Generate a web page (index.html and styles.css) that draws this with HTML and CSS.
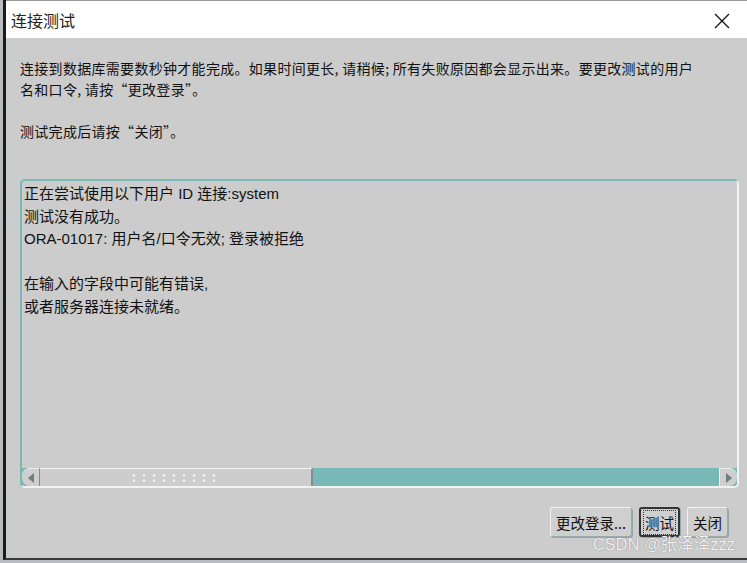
FILE: index.html
```html
<!DOCTYPE html>
<html lang="zh-CN">
<head>
  <meta charset="UTF-8">
  <title>连接测试</title>
  <link rel="stylesheet" href="styles.css">
</head>
<body>
  <div class="window">
    <div class="titlebar">
      <span class="title">连接测试</span>
      <svg class="close" width="16" height="16" viewBox="0 0 16 16">
        <path d="M1 1 L15 15 M15 1 L1 15" stroke="#111" stroke-width="1.3" fill="none"/>
      </svg>
    </div>
    <div class="content">
      <p class="intro">连接到数据库需要数秒钟才能完成。如果时间更长, 请稍候; 所有失败原因都会显示出来。要更改测试的用户<br>名和口令, 请按“更改登录”。</p>
      <p class="intro">测试完成后请按“关闭”。</p>

      <div class="output">
        <div class="output-text">
          <div>正在尝试使用以下用户 ID 连接:system</div>
          <div>测试没有成功。</div>
          <div>ORA-01017: 用户名/口令无效; 登录被拒绝</div>
          <div>&nbsp;</div>
          <div>在输入的字段中可能有错误,</div>
          <div>或者服务器连接未就绪。</div>
        </div>
        <div class="hscroll">
          <div class="arrow left"><span></span></div>
          <div class="thumb"><span class="grip"></span></div>
          <div class="track"></div>
          <div class="arrow right"><span></span></div>
        </div>
      </div>

      <div class="buttons">
        <button class="btn">更改登录...</button>
        <button class="btn focused"><span>测试</span></button>
        <button class="btn">关闭</button>
      </div>
    </div>
    <div class="watermark">CSDN @张泽泽zzz</div>
  </div>
</body>
</html>
```

FILE: styles.css
```css
:root {
  --bg: #cccccc;
  --teal: #78b9b7;
  --text: #111;
}

* {
  box-sizing: border-box;
}

body {
  margin: 0;
  background: #b9bcc0;
  font-family: "Liberation Sans", "Noto Sans CJK SC", sans-serif;
  color: var(--text);
}

.window {
  position: relative;
  margin-left: 3px;
  width: 744px;
  height: 560px;
  border-left: 3px solid #1b1b1b;
  border-bottom: 2px solid #3a3a3a;
  background: var(--bg);
  display: flex;
  flex-direction: column;
}

.titlebar {
  height: 38px;
  background: #fff;
  border-top: 1px solid #9a9a9a;
  display: flex;
  align-items: center;
  justify-content: space-between;
  padding: 0 17px 0 5px;
}

.title {
  font-size: 16px;
  color: #222;
}

.close {
  display: block;
  margin-top: 2px;
}

.content {
  flex: 1;
  display: flex;
  flex-direction: column;
  padding: 0 8px 0 14px;
}

.intro {
  margin: 0;
  font-family: "Noto Sans CJK SC", sans-serif;
  font-size: 14px;
  letter-spacing: 0.3px;
  line-height: 21px;
  white-space: nowrap;
}

.intro:first-child {
  margin-top: 20px;
  margin-bottom: 21px;
}

.output {
  margin-top: 37px;
  height: 309px;
  border: 2px solid var(--teal);
  border-right-color: #f2f2f2;
  border-bottom-color: #f2f2f2;
  border-radius: 5px;
  display: flex;
  flex-direction: column;
  overflow: hidden;
}

.output-text {
  flex: 1;
  font-size: 15px;
  line-height: 22.6px;
  padding: 2px 0 0 2px;
}

.hscroll {
  height: 18px;
  display: flex;
  background: var(--teal);
}

.arrow {
  width: 18px;
  background: #cfcfcf;
  display: flex;
  align-items: center;
  justify-content: center;
  border-top: 1px solid #eee;
}

.arrow.left {
  border-radius: 8px 0 0 8px;
  border-right: 1px solid #888;
}

.arrow.right {
  border-radius: 0 8px 8px 0;
  border-left: 1px solid #eee;
}

.arrow span {
  width: 0;
  height: 0;
  border-top: 5px solid transparent;
  border-bottom: 5px solid transparent;
}

.arrow.left span {
  border-right: 6px solid #6f7f80;
}

.arrow.right span {
  border-left: 6px solid #6f7f80;
}

.thumb {
  width: 273px;
  background: #cdcdcd;
  border-top: 1px solid #f4f4f4;
  border-right: 2px solid #8a8a8a;
  display: flex;
  align-items: center;
  justify-content: center;
}

.grip {
  width: 94px;
  height: 9px;
  background-image: radial-gradient(circle, #fff 1px, transparent 1.2px);
  background-size: 10px 5px;
}

.track {
  flex: 1;
}

.buttons {
  display: flex;
  justify-content: flex-end;
  gap: 7px;
  margin-top: 19px;
  padding-right: 11px;
}

.btn {
  height: 30px;
  padding: 0 5px;
  font-family: "Noto Sans CJK SC", sans-serif;
  font-size: 14.5px;
  color: #111;
  background: #cfcfcf;
  border: 1px solid #9aa;
  border-top-color: #f2f2f2;
  border-left-color: #f2f2f2;
  border-radius: 3px;
  box-shadow: 1px 1px 0 #8fa9a8;
}

.btn.focused {
  border: 2px solid #333;
  padding: 0 2px;
}

.btn.focused span {
  border: 1px dotted #333;
  padding: 1px 1px;
}

.watermark {
  position: absolute;
  right: 12px;
  bottom: 3px;
  font-size: 16.5px;
  color: #f2f2f2;
  text-shadow: 0 0 1px #666;
}
```
